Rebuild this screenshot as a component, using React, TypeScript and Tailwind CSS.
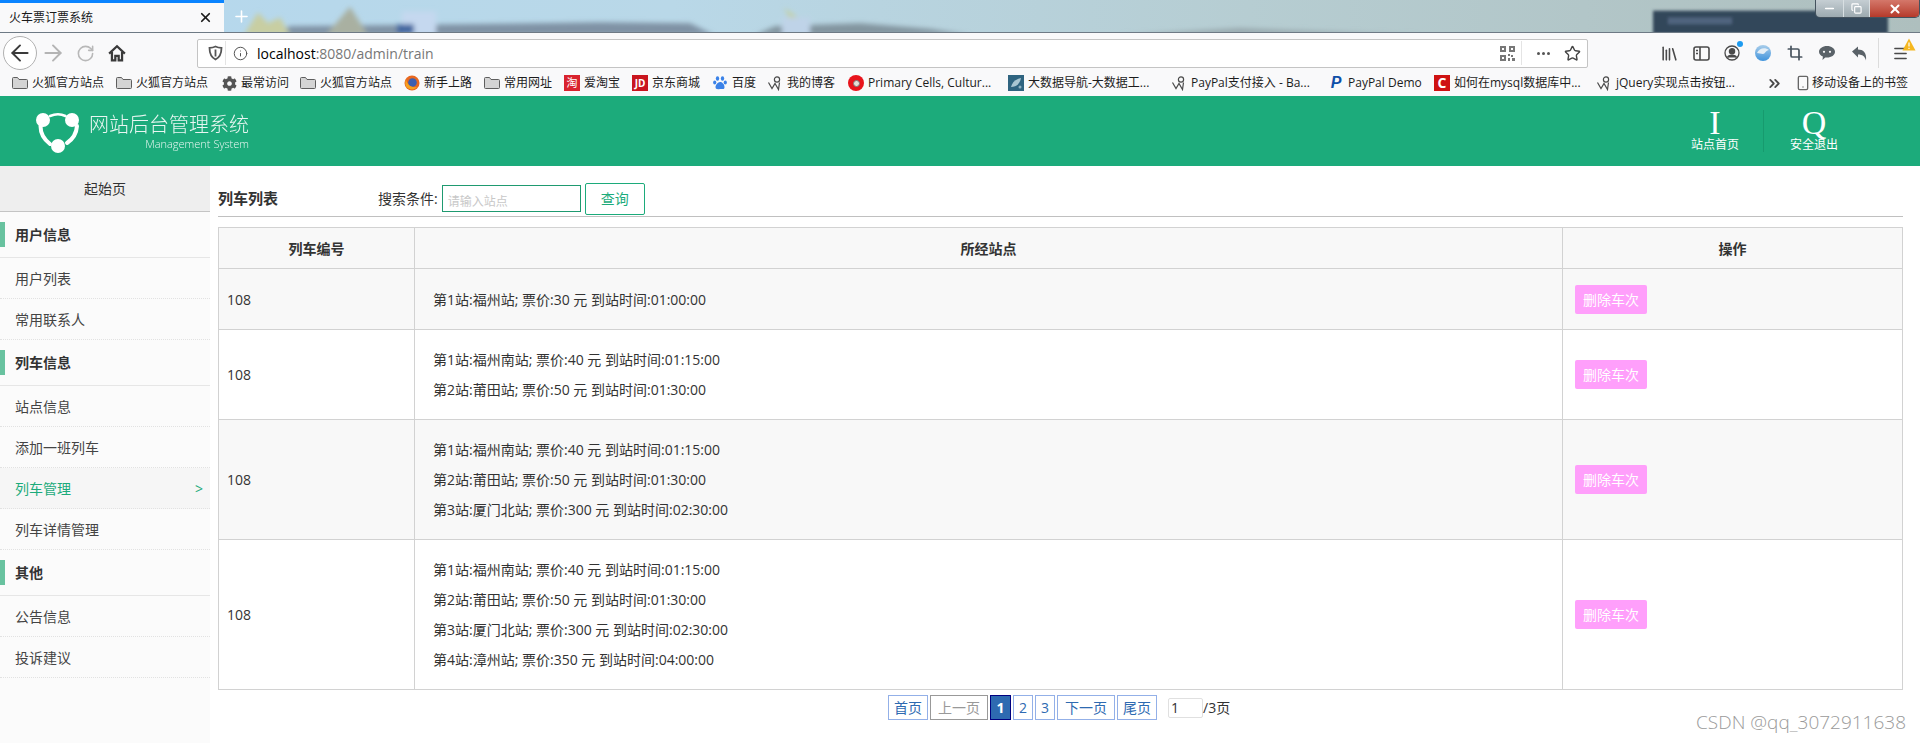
import React from "react";
import { ArrowLeft, ArrowRight, RotateCw, Info, Star, Library, Crop, Menu, ChevronsRight, Smartphone, X, Plus, Minus, Copy } from "lucide-react";
import { FaCog } from "react-icons/fa";

const sideGroups = [
  { title: "用户信息", items: ["用户列表", "常用联系人"] },
  { title: "列车信息", items: ["站点信息", "添加一班列车", "列车管理", "列车详情管理"] },
  { title: "其他", items: ["公告信息", "投诉建议"] },
];

const rows = [
  { bg: "bg-[#f8f8f8]", stops: ["第1站:福州站; 票价:30 元 到站时间:01:00:00"] },
  { bg: "bg-white", stops: ["第1站:福州南站; 票价:40 元 到站时间:01:15:00", "第2站:莆田站; 票价:50 元 到站时间:01:30:00"] },
  {
    bg: "bg-[#f8f8f8]",
    stops: [
      "第1站:福州南站; 票价:40 元 到站时间:01:15:00",
      "第2站:莆田站; 票价:50 元 到站时间:01:30:00",
      "第3站:厦门北站; 票价:300 元 到站时间:02:30:00",
    ],
  },
  {
    bg: "bg-white",
    stops: [
      "第1站:福州南站; 票价:40 元 到站时间:01:15:00",
      "第2站:莆田站; 票价:50 元 到站时间:01:30:00",
      "第3站:厦门北站; 票价:300 元 到站时间:02:30:00",
      "第4站:漳州站; 票价:350 元 到站时间:04:00:00",
    ],
  },
];

function FolderIcon() {
  return (
    <svg width="16" height="16" viewBox="0 0 16 16" className="shrink-0">
      <path d="M.5 3.500A1 1 0 0 1 1.500 2.500h4l1.500 2h7.500a1 1 0 0 1 1 1v7a1 1 0 0 1-1 1h-13a1 1 0 0 1-1-1z" fill="#d4d4d4" stroke="#5e5e5e" />
    </svg>
  );
}

function BlogIcon() {
  return (
    <svg width="16" height="16" viewBox="0 0 16 16" className="shrink-0" fill="none" stroke="#4a4a4a" strokeWidth="1.2">
      <circle cx="10" cy="4.500" r="2.600" />
      <path d="M1.500 7.500l3.500 6 3-5 3.500 6 1-7" />
    </svg>
  );
}

function BaiduIcon() {
  return (
    <svg width="16" height="16" viewBox="0 0 16 16" className="shrink-0" fill="#3b82e8">
      <ellipse cx="5.500" cy="3.500" rx="1.700" ry="2.200" />
      <ellipse cx="10.500" cy="3.500" rx="1.700" ry="2.200" />
      <ellipse cx="2.700" cy="7.500" rx="1.600" ry="2" />
      <ellipse cx="13.300" cy="7.500" rx="1.600" ry="2" />
      <path d="M8 7c-2 0-4.500 3-4.500 5s1.500 2.500 4.500 2 4.500 1 4.500-2S10 7 8 7z" />
    </svg>
  );
}

function FirefoxIcon() {
  return (
    <svg width="16" height="16" viewBox="0 0 16 16" className="shrink-0">
      <circle cx="8" cy="8" r="7.500" fill="#e8671f" />
      <circle cx="8.500" cy="7.500" r="4.300" fill="#3b5fb0" />
      <path d="M2 4c1 5 4 9 11 8-2 3-7 3-9.500 1S1 7 2 4z" fill="#f6a21e" />
    </svg>
  );
}

function BigDataIcon() {
  return (
    <svg width="16" height="16" viewBox="0 0 16 16" className="shrink-0">
      <rect width="16" height="16" fill="#2f6480" />
      <path d="M3 12c1-5 5-8 10-9-1 5-4 9-10 9z" fill="#a9c6d2" />
      <circle cx="12" cy="12" r="1.500" fill="#8fb2c2" />
    </svg>
  );
}

const bookmarks = [
  { w: "w-[104px]", icon: <FolderIcon />, text: "火狐官方站点" },
  { w: "w-[106px]", icon: <FolderIcon />, text: "火狐官方站点" },
  { w: "w-[78px]", icon: <FaCog size={15} className="text-[#555] shrink-0" />, text: "最常访问" },
  { w: "w-[104px]", icon: <FolderIcon />, text: "火狐官方站点" },
  { w: "w-[80px]", icon: <FirefoxIcon />, text: "新手上路" },
  { w: "w-[80px]", icon: <FolderIcon />, text: "常用网址" },
  {
    w: "w-[68px]",
    icon: <span className="w-4 h-4 shrink-0 bg-[#d9232e] text-white text-[11px] leading-4 text-center">淘</span>,
    text: "爱淘宝",
  },
  {
    w: "w-[80px]",
    icon: <span className="w-4 h-4 shrink-0 bg-[#c9151e] text-white text-[10px] font-bold leading-4 text-center">JD</span>,
    text: "京东商城",
  },
  { w: "w-[55px]", icon: <BaiduIcon />, text: "百度" },
  { w: "w-[81px]", icon: <BlogIcon />, text: "我的博客" },
  {
    w: "w-[160px]",
    icon: (
      <span className="w-4 h-4 shrink-0 rounded-full bg-[#e8141c] flex items-center justify-center">
        <span className="w-[7px] h-[7px] rounded-full bg-[#e6e0d8] border border-[#7a7a7a]" />
      </span>
    ),
    text: "Primary Cells, Cultur...",
  },
  { w: "w-[163px]", icon: <BigDataIcon />, text: "大数据导航-大数据工..." },
  { w: "w-[157px]", icon: <BlogIcon />, text: "PayPal支付接入 - Ba..." },
  {
    w: "w-[106px]",
    icon: <span className="w-4 h-4 shrink-0 text-[#0f4fa8] text-[16px] leading-4 font-bold italic text-center font-['Liberation_Sans',sans-serif]">P</span>,
    text: "PayPal Demo",
  },
  {
    w: "w-[162px]",
    icon: <span className="w-4 h-4 shrink-0 bg-[#cf1212] text-white text-[14px] leading-4 font-bold text-center">C</span>,
    text: "如何在mysql数据库中...",
  },
  { w: "w-[170px]", icon: <BlogIcon />, text: "jQuery实现点击按钮..." },
];

function Wallpaper() {
  return (
    <svg className="absolute inset-0 w-full h-full" viewBox="0 0 1920 33" preserveAspectRatio="none">
      <defs>
        <linearGradient id="sky" x1="0" x2="1" y1="0" y2="0">
          <stop offset="0" stopColor="#b5d8ee" />
          <stop offset="0.35" stopColor="#b9d8e8" />
          <stop offset="0.65" stopColor="#b6cdd2" />
          <stop offset="1" stopColor="#aebfbe" />
        </linearGradient>
        <filter id="wblur" x="-10%" y="-50%" width="120%" height="200%">
          <feGaussianBlur stdDeviation="2.500" />
        </filter>
        <filter id="wblur2" x="-10%" y="-50%" width="120%" height="200%">
          <feGaussianBlur stdDeviation="1.500" />
        </filter>
      </defs>
      <rect width="1920" height="33" fill="url(#sky)" />
      <g filter="url(#wblur)">
        <path d="M270 36 L290 27 L460 25 L600 23 L690 24 L714 36 Z" fill="#7f92a4" />
        <path d="M755 36 L775 27 L860 24 L930 30 L970 36 Z" fill="#82949f" />
        <path d="M244 36 L258 13 L268 24 L280 18 L290 36 Z" fill="#c8cea2" />
        <path d="M326 36 L350 7 L368 36 Z" fill="#a9b0a1" />
        <rect x="402" y="12" width="34" height="24" fill="#c5d8ef" />
        <rect x="397" y="25" width="17" height="10" fill="#3f659f" />
        <path d="M784 8 L798 18 L790 20 Z" fill="#c4d0a4" />
        <rect x="782" y="18" width="28" height="18" fill="#bfd3e8" />
        <path d="M1120 36 L1240 29 L1420 36 Z" fill="#98a9ae" />
      </g>
      <g filter="url(#wblur2)">
        <rect x="1653" y="11" width="235" height="24" fill="#33475a" />
        <rect x="1668" y="18" width="64" height="7" fill="#50647e" />
      </g>
    </svg>
  );
}

function BrowserChrome() {
  return (
    <div className="h-[96px] bg-[#f9f9fa] text-[#1a1a1a] flex flex-col">
      {/* Tabs */}
      <div className="relative h-[33px] border-b border-[#6e7a85] flex items-start overflow-hidden">
        <Wallpaper />
        <div className="relative w-[224px] h-[32px] bg-[#f9f9fa] border-t-[3px] border-[#0a84ff] flex items-center pl-[9px] pr-[11px] text-[12px]">
          <span className="flex-1">火车票订票系统</span>
          <X size={15} strokeWidth={2.8} />
        </div>
        <div className="relative w-[34px] h-[32px] flex items-center justify-center text-white">
          <Plus size={19} strokeWidth={2} />
        </div>
        {/* window buttons */}
        <div className="absolute right-0 top-0 w-[105px] h-[18px] flex border border-t-0 border-[#44525e] rounded-b-[5px] overflow-hidden">
          <div className="w-[28px] bg-gradient-to-b from-[#c5ced3] to-[#9daab0] border-r border-[#d8dfe2] flex items-center justify-center text-white">
            <Minus size={13} strokeWidth={3} />
          </div>
          <div className="w-[26px] bg-gradient-to-b from-[#c5ced3] to-[#9daab0] border-r border-[#d8dfe2] flex items-center justify-center text-white">
            <Copy size={11} strokeWidth={2.5} />
          </div>
          <div className="flex-1 bg-gradient-to-b from-[#d4776a] to-[#b5392a] flex items-center justify-center text-white">
            <X size={14} strokeWidth={3.5} />
          </div>
        </div>
      </div>

      {/* Toolbar */}
      <div className="h-[34px] pt-[6px] flex items-center">
        <div className="ml-[3px] w-[34px] h-[34px] shrink-0 rounded-full border border-[#b1b1b1] bg-white flex items-center justify-center">
          <ArrowLeft size={26} strokeWidth={1.8} className="text-[#3a3a3a]" />
        </div>
        <div className="w-[32px] flex justify-center">
          <ArrowRight size={26} strokeWidth={1.8} className="text-[#b4b4b4]" />
        </div>
        <div className="w-[32px] flex justify-center">
          <RotateCw size={19} strokeWidth={2} className="text-[#b8b8b8]" />
        </div>
        <div className="w-[32px] flex justify-center">
          <svg width="18" height="18" viewBox="0 0 16 16" fill="none" stroke="#3a3a3a" strokeWidth="2">
            <path d="M1 8.500 8 2l7 6.500" />
            <path d="M3.500 7v7.500h3V10.500h3v4h3V7" />
          </svg>
        </div>
        <div className="ml-[64px] w-[1391px] h-[29px] bg-white border border-[#c4c4c4] rounded-[2px] flex items-center text-[#555]">
          <div className="w-[27px] flex justify-end pr-[2px]">
            <svg width="15" height="16" viewBox="0 0 15 16" fill="none" stroke="#555" strokeWidth="1.800">
              <path d="M7.500 1.500c2 1 4 1.300 6 1.300 0 6-1.500 9.500-6 11.700-4.500-2.200-6-5.700-6-11.700 2 0 4-.3 6-1.300z" />
              <path d="M7.500 4.500v7" />
            </svg>
          </div>
          <div className="w-px h-[24px] bg-[#e4e4e4] mr-[7px]" />
          <Info size={15} strokeWidth={1.600} className="text-[#555]" />
          <span className="ml-[9px] text-[14px] flex-1">
            <span className="text-black">localhost</span>
            <span className="text-[#777]">:8080/admin/train</span>
          </span>
          {/* qr code */}
          <svg width="15" height="15" viewBox="0 0 15 15" fill="#777" className="mr-[6px]">
            <path d="M0 0h6v6H0zM2 2v2h2V2zM9 0h6v6H9zM11 2v2h2V2zM0 9h6v6H0zM2 11v2h2v-2zM8 8h2v2H8zM11 9h2v2h-2zM8 12h2v3H8zM12 12h3v3h-3z" fillRule="evenodd" />
          </svg>
          <div className="w-px h-[24px] bg-[#e4e4e4]" />
          <div className="w-[41px] flex justify-center gap-[2px] ml-[1px]">
            <span className="w-[3px] h-[3px] rounded-full bg-[#555]" />
            <span className="w-[3px] h-[3px] rounded-full bg-[#555]" />
            <span className="w-[3px] h-[3px] rounded-full bg-[#555]" />
          </div>
          <Star size={17} strokeWidth={2} className="text-[#444]" />
          <span className="w-[6px]" />
        </div>
        <div className="ml-[65px] w-[32px] flex justify-center">
          <Library size={19} strokeWidth={2} className="text-[#4a4a4a]" />
        </div>
        <div className="w-[32px] flex justify-center">
          <svg width="17" height="15" viewBox="0 0 17 15" fill="none" stroke="#4a4a4a" strokeWidth="1.600">
            <rect x="1" y="1" width="15" height="13" rx="2" />
            <path d="M7 1v13M3 4.500h2M3 7.500h2" />
          </svg>
        </div>
        <div className="relative w-[30px] flex justify-center">
          <svg width="16" height="16" viewBox="0 0 16 16" fill="none" stroke="#4a4a4a" strokeWidth="1.300">
            <circle cx="8" cy="8" r="7" />
            <circle cx="8" cy="6.300" r="2.600" fill="#4a4a4a" />
            <path d="M3.500 12.500c1-3 8-3 9 0" fill="#4a4a4a" />
          </svg>
          <span className="absolute top-[-4px] right-[4px] w-[6px] h-[6px] rounded-full bg-[#1d9bf0]" />
        </div>
        <div className="w-[32px] flex justify-center">
          <svg width="16" height="16" viewBox="0 0 16 16">
            <defs>
              <linearGradient id="ball" x1="0" x2="0" y1="0" y2="1">
                <stop offset="0" stopColor="#a9cdea" />
                <stop offset="1" stopColor="#3f93dc" />
              </linearGradient>
            </defs>
            <circle cx="8" cy="8" r="8" fill="url(#ball)" />
            <path d="M2 8c2-5 8-6 12-3-3 0-4 4-6 4S4 8 2 8z" fill="#e4eef6" />
          </svg>
        </div>
        <div className="w-[32px] flex justify-center">
          <Crop size={16} strokeWidth={2.600} className="text-[#4a5560]" />
        </div>
        <div className="w-[32px] flex justify-center">
          <svg width="16" height="14" viewBox="0 0 16 14">
            <path d="M8 0c4.400 0 8 2.500 8 5.800s-3.600 5.800-8 5.800c-.6 0-1.200 0-1.800-.1L3.500 14l.4-3.400C1.500 9.600 0 7.800 0 5.800 0 2.500 3.600 0 8 0z" fill="#5a6268" />
            <circle cx="5" cy="5.800" r="1.100" fill="#f9f9fa" />
            <circle cx="11" cy="5.800" r="1.100" fill="#f9f9fa" />
          </svg>
        </div>
        <div className="w-[32px] flex justify-center">
          <svg width="15" height="15" viewBox="0 0 15 15" fill="#5a6268">
            <path d="M0 5.500 6 .5v3c5 0 9 3 8 11-1-4-3.500-6-8-6v3z" />
          </svg>
        </div>
        <div className="w-px h-[30px] bg-[#dcdcdc] ml-[3px]" />
        <div className="relative ml-[13px] flex justify-center">
          <Menu size={17} strokeWidth={2} className="text-[#4a4a4a]" />
          <svg width="14" height="13" viewBox="0 0 14 13" className="absolute top-[-7px] left-[10px]">
            <path d="M7 .5 13.500 12.500H.5z" fill="#f5b71f" />
            <path d="M7 4.500v4M7 9.700v1.300" stroke="#fff" strokeWidth="1.200" />
          </svg>
        </div>
      </div>

      {/* Bookmarks */}
      <div className="h-[29px] pt-[3px] pl-[12px] flex items-center text-[12px] text-[#1c1c1c]">
        {bookmarks.map((b, i) => (
          <div key={i} className={`${b.w} flex items-center gap-[4px] whitespace-nowrap shrink-0`}>
            {b.icon}
            <span>{b.text}</span>
          </div>
        ))}
        <ChevronsRight size={17} strokeWidth={2.6} className="text-[#4a4a4a] shrink-0" />
        <div className="ml-[12px] flex items-center gap-[1px] whitespace-nowrap">
          <Smartphone size={16} strokeWidth={2} className="text-[#666]" />
          <span>移动设备上的书签</span>
        </div>
      </div>
    </div>
  );
}

function Logo() {
  return (
    <svg width="44" height="44" viewBox="0 0 44 44" fill="none" className="shrink-0">
      <g stroke="#fff" strokeLinecap="round">
        <path d="M4.500 17c0 7 3 13 9.500 18" strokeWidth="4" />
        <path d="M14 7c5-2 11-2 15.500 0" strokeWidth="2.500" />
        <path d="M41 17c-.5 7-4 13-10 17" strokeWidth="4" />
      </g>
      <circle cx="7" cy="11" r="7" fill="#fff" />
      <circle cx="36" cy="11" r="7" fill="#fff" />
      <circle cx="22" cy="37" r="7" fill="#fff" />
    </svg>
  );
}

function HeaderLink({ glyph, label, width }: { glyph: string; label: string; width: string }) {
  return (
    <div className={`${width} h-[42px] flex flex-col items-center text-white`}>
      <span className="h-[26px] font-['Liberation_Serif',serif] text-[34px] leading-[26px]">{glyph}</span>
      <span className="text-[12px] leading-[18px]">{label}</span>
    </div>
  );
}

function Sidebar() {
  return (
    <aside className="w-[210px] shrink-0 bg-[#fbfbfb] text-[14px] text-[#444]">
      <div className="h-[46px] bg-[#eeeeee] border-b border-[#c4c4c4] flex items-center justify-center text-[#333]">起始页</div>
      {sideGroups.map((g) => (
        <div key={g.title}>
          <div className="pt-[10px] pb-[10px] border-b border-[#e6e6e6]">
            <div className="h-[25px] border-l-[5px] border-[#68c29f] pl-[10px] font-bold text-[#333] leading-[25px]">{g.title}</div>
          </div>
          {g.items.map((it) => {
            const active = it === "列车管理";
            return (
              <div
                key={it}
                className={`h-[41px] pl-[15px] pr-[7px] flex items-center justify-between border-b border-dotted border-[#e2e2e2] ${active ? "bg-[#f6f6f6] text-[#1bab7b]" : ""}`}
              >
                <span>{it}</span>
                {active && <span className="text-[14px]">&gt;</span>}
              </div>
            );
          })}
        </div>
      ))}
    </aside>
  );
}

function Pager() {
  const base = "h-[25px] flex items-center justify-center border text-[14px]";
  const link = `${base} border-[#93b0e8] text-[#2e6ab1]`;
  return (
    <div className="mt-[5px] ml-[670px] flex items-center gap-[2px]">
      <span className={`${link} w-[40px]`}>首页</span>
      <span className={`${base} w-[58px] border-[#999] text-[#999]`}>上一页</span>
      <span className={`${base} w-[21px] border-[#000080] bg-[#2e6ab1] text-white font-bold`}>1</span>
      <span className={`${link} w-[20px]`}>2</span>
      <span className={`${link} w-[20px]`}>3</span>
      <span className={`${link} w-[58px]`}>下一页</span>
      <span className={`${link} w-[40px]`}>尾页</span>
      <span className="ml-[9px] w-[35px] h-[20px] border border-[#e0e0e0] rounded-[2px] pl-[2px] text-[14px] leading-[18px] text-[#333]">1</span>
      <span className="text-[14px] text-[#333] ml-[-2px]">/3页</span>
    </div>
  );
}

export default function App() {
  return (
    <div className="relative w-[1920px] h-[743px] overflow-hidden bg-white flex flex-col font-['Open_Sans','Noto_Sans_CJK_SC',sans-serif]">
      <BrowserChrome />

      <header className="h-[70px] bg-[#1cab7b] flex items-center pl-[36px] pr-[56px]">
        <Logo />
        <div className="ml-[9px] flex-1 text-white">
          <div className="w-[160px] text-[20px] leading-[26px] font-light opacity-90">网站后台管理系统</div>
          <div className="w-[160px] text-right text-[11px] leading-[12px] opacity-90 font-light">Management System</div>
        </div>
        <HeaderLink glyph="I" label="站点首页" width="w-[96px]" />
        <div className="w-px h-[42px] bg-[#179a6e]" />
        <HeaderLink glyph="Q" label="安全退出" width="w-[100px]" />
      </header>

      <div className="flex flex-1 min-h-0">
        <Sidebar />
        <main className="flex-1 pl-[8px] pr-[18px] text-[14px] text-[#333]">
          <div className="h-[51px] pt-[15px] border-b border-[#c0c0c0] flex items-center">
            <h1 className="w-[160px] text-[15px] font-bold">列车列表</h1>
            <span>搜索条件:</span>
            <input
              readOnly
              placeholder="请输入站点"
              className="ml-[4px] w-[139px] h-[27px] border border-[#1f9a70] pl-[5px] pt-[6px] text-[12px] placeholder:text-[#c8c8c8] outline-none"
            />
            <button className="ml-[4px] w-[60px] h-[32px] border border-[#1cab7b] rounded-[2px] text-[#1cab7b] text-[14px]">查询</button>
          </div>

          <table className="mt-[10px] w-[1684px] table-fixed border-collapse">
            <colgroup>
              <col className="w-[196px]" />
              <col className="w-[1148px]" />
              <col className="w-[340px]" />
            </colgroup>
            <thead>
              <tr className="h-[41px] bg-[#f8f8f8]">
                <th className="border border-[#d2d2d2] font-bold">列车编号</th>
                <th className="border border-[#d2d2d2] font-bold">所经站点</th>
                <th className="border border-[#d2d2d2] font-bold">操作</th>
              </tr>
            </thead>
            <tbody>
              {rows.map((r, i) => (
                <tr key={i} className={`${r.bg} h-[61px]`}>
                  <td className="border border-[#d2d2d2] pl-[8px]">108</td>
                  <td className="border border-[#d2d2d2] pl-[18px] pt-[15px] pb-[14px]">
                    {r.stops.map((s, j) => (
                      <p key={j} className="leading-[30px]">{s}</p>
                    ))}
                  </td>
                  <td className="border border-[#d2d2d2] pl-[12px]">
                    <button className="w-[72px] h-[29px] bg-[#ff9ffb] rounded-[2px] text-white text-[14px]">删除车次</button>
                  </td>
                </tr>
              ))}
            </tbody>
          </table>

          <Pager />
        </main>
      </div>

      <span className="absolute right-[14px] bottom-[7px] text-[19px] text-[#9a9a9a] font-light">CSDN @qq_3072911638</span>
    </div>
  );
}
